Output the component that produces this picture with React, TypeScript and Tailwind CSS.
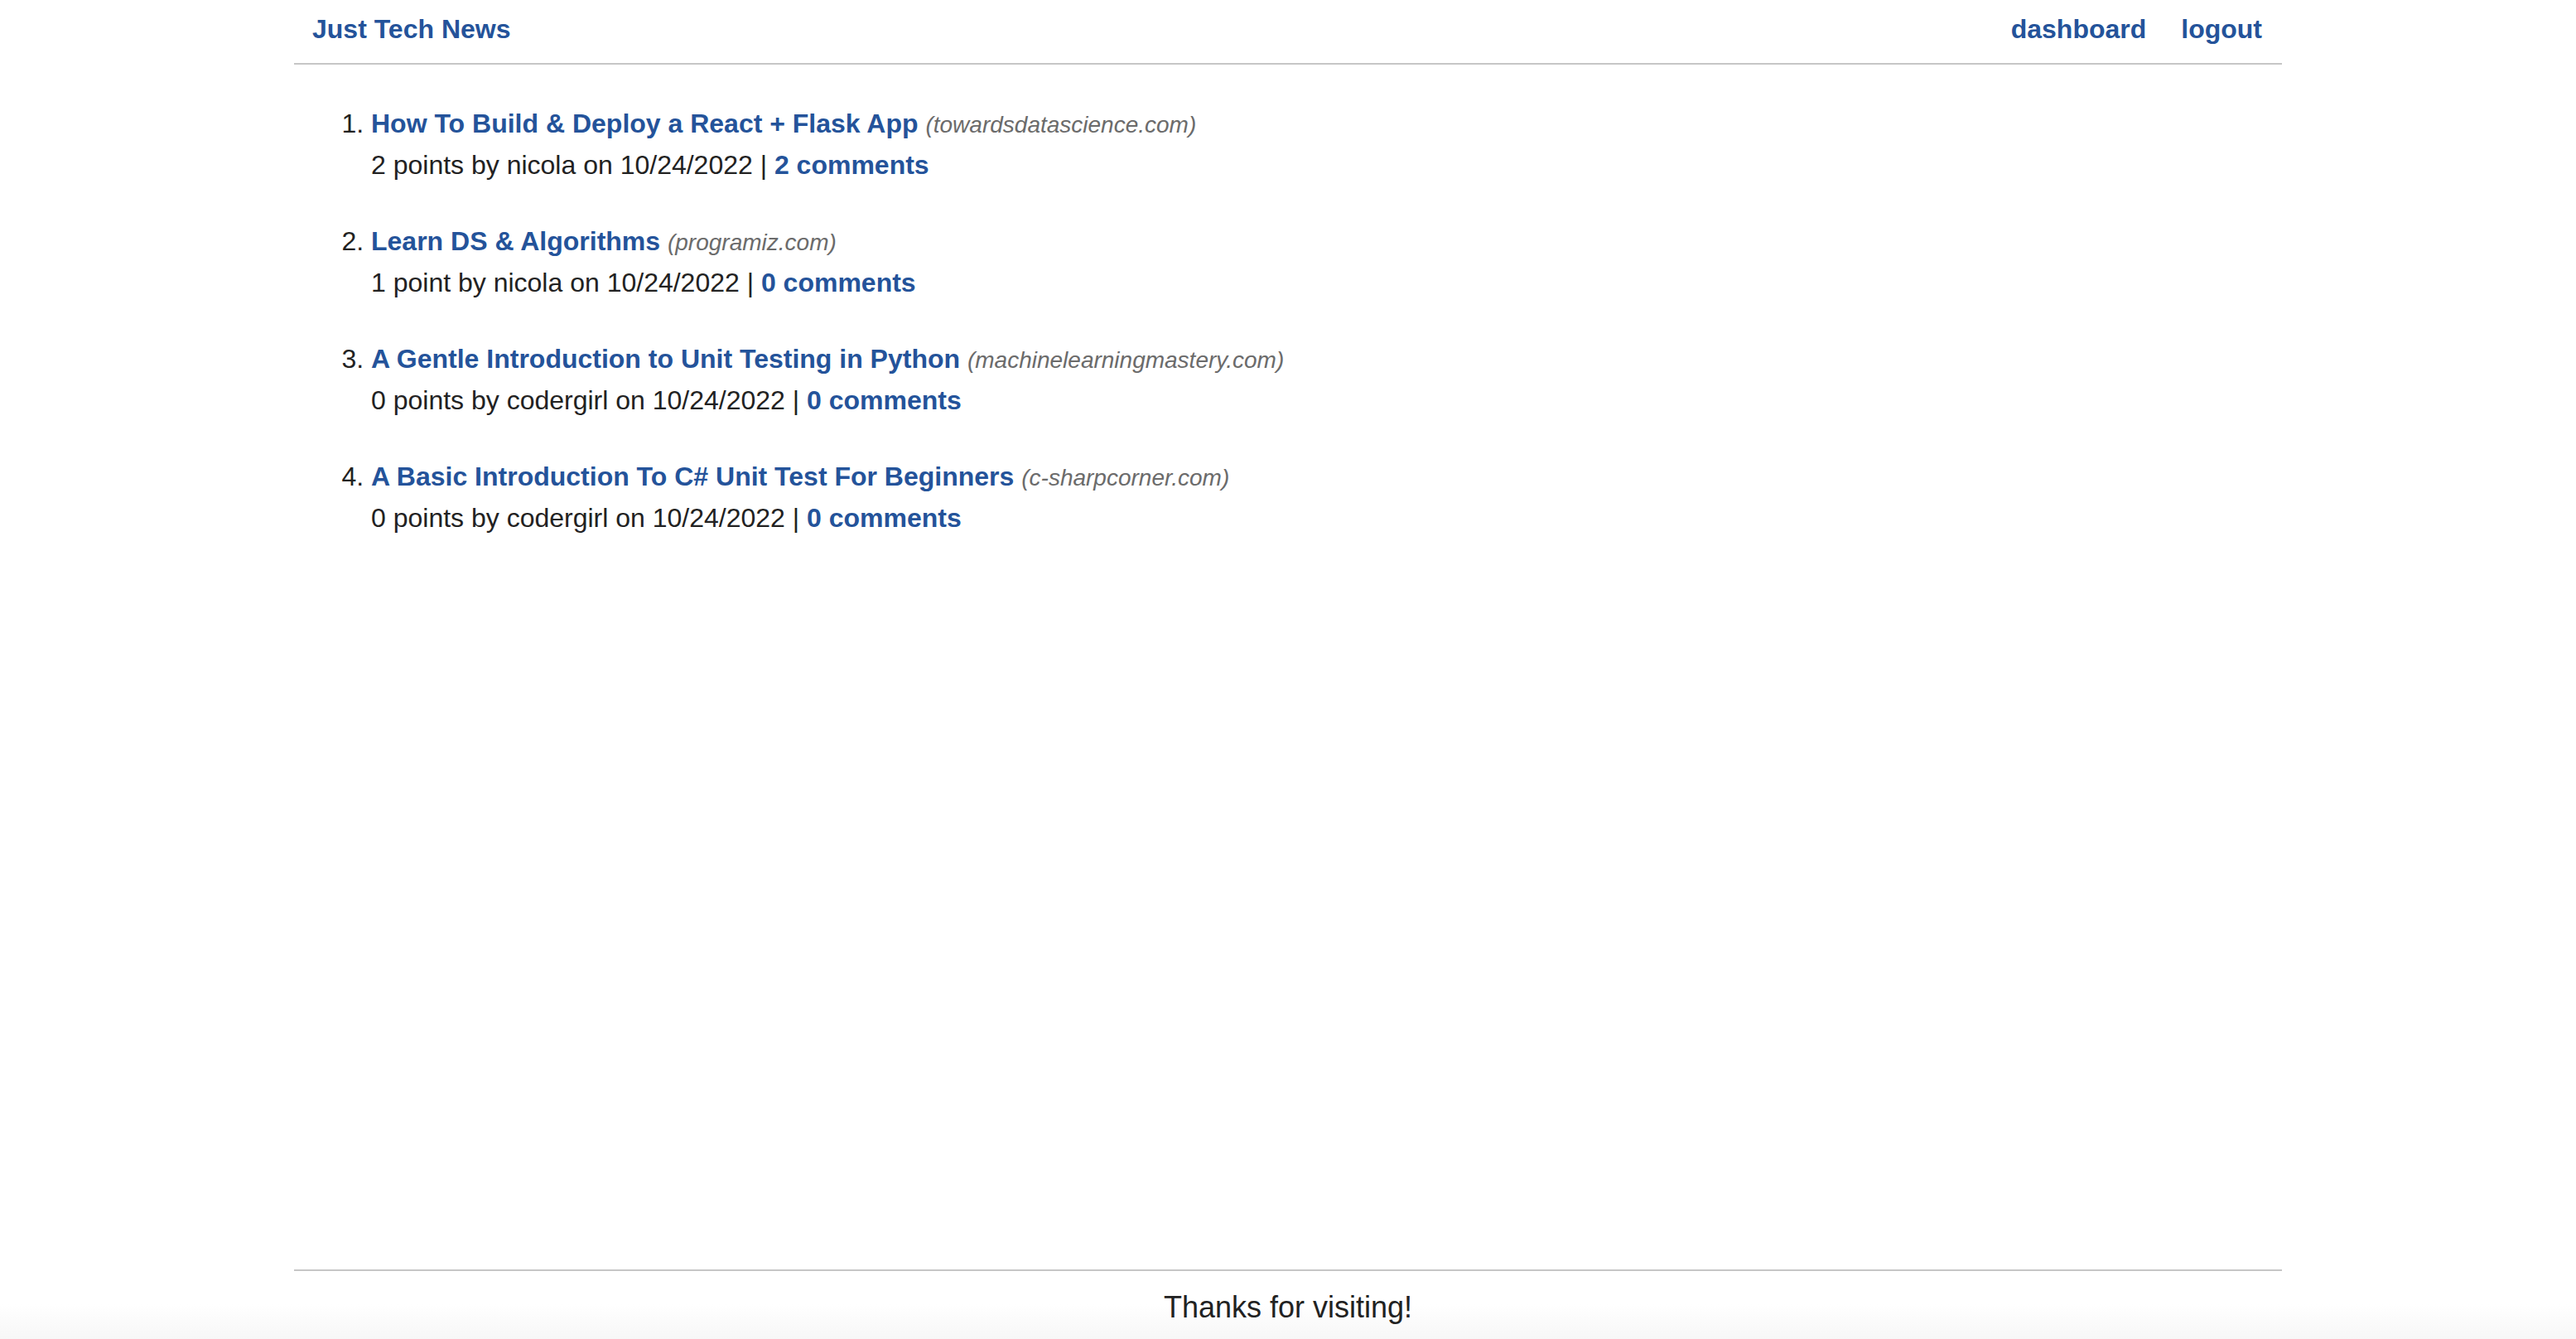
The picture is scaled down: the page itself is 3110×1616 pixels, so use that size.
import React from 'react';

interface Post {
    title: string;
    domain: string;
    points: number;
    author: string;
    date: string;
    comments: number;
}

const posts: Post[] = [
    { title: 'How To Build & Deploy a React + Flask App', domain: 'towardsdatascience.com', points: 2, author: 'nicola', date: '10/24/2022', comments: 2 },
    { title: 'Learn DS & Algorithms', domain: 'programiz.com', points: 1, author: 'nicola', date: '10/24/2022', comments: 0 },
    { title: 'A Gentle Introduction to Unit Testing in Python', domain: 'machinelearningmastery.com', points: 0, author: 'codergirl', date: '10/24/2022', comments: 0 },
    { title: 'A Basic Introduction To C# Unit Test For Beginners', domain: 'c-sharpcorner.com', points: 0, author: 'codergirl', date: '10/24/2022', comments: 0 },
];

const PostItem: React.FC<{ post: Post }> = ({ post }) => (
    <li className="mb-[44px]">
        <div className="leading-[48px]">
            <a href="#" className="font-bold text-[#24539a]">{post.title}</a>{' '}
            <span className="italic text-[28px] text-[#6b6b6b]">({post.domain})</span>
        </div>
        <div className="leading-[48px]">
            {post.points} {post.points === 1 ? 'point' : 'points'} by {post.author} on {post.date} |{' '}
            <a href="#" className="font-bold text-[#24539a]">{post.comments} comments</a>
        </div>
    </li>
);

export default function App() {
    return (
        <div className="h-screen flex flex-col bg-white text-[#222] font-['Liberation_Sans',Arial,sans-serif] text-[32px]">
            <div className="w-[2400px] mx-auto flex flex-col flex-1">
                {/* Header */}
                <header className="h-[78px] shrink-0 border-b-2 border-[#c6c6c6] flex items-start justify-between pl-[22px] pr-[24px] pt-[15px]">
                    <a href="#" className="font-bold text-[#24539a] leading-[40px]">Just Tech News</a>
                    <nav className="flex gap-[42px] leading-[40px]">
                        <a href="#" className="font-bold text-[#24539a]">dashboard</a>
                        <a href="#" className="font-bold text-[#24539a]">logout</a>
                    </nav>
                </header>

                {/* Posts */}
                <main className="flex-1">
                    <ol className="list-decimal pl-[93px] mt-[47px]">
                        {posts.map((p, i) => <PostItem key={i} post={p} />)}
                    </ol>
                </main>
            </div>

            {/* Footer */}
            <footer className="h-[84px] shrink-0 bg-gradient-to-b from-white via-white to-[#f7f7f7]">
                <div className="w-[2400px] mx-auto border-t-2 border-[#c6c6c6] text-center text-[36px] leading-[44px] pt-[22px]">
                    Thanks for visiting!
                </div>
            </footer>
        </div>
    );
}
